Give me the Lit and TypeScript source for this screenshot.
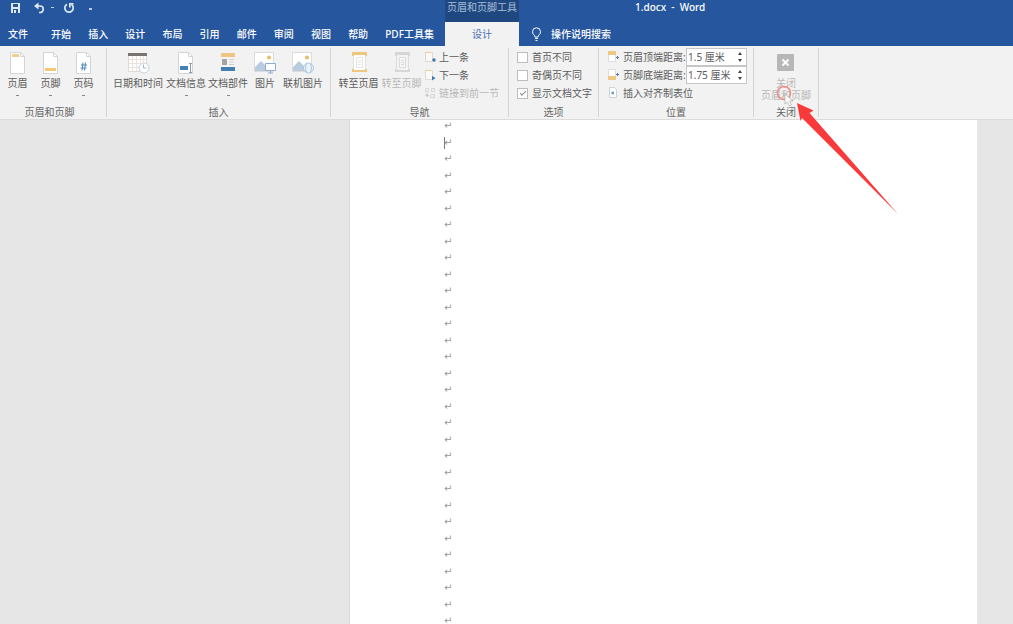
import { LitElement, html, css, svg, nothing } from "lit";
import { customElement, property } from "lit/decorators.js";

const sheet = svg`<path d="M1.5.5h10l4 4v17h-14z" fill="#fff" stroke="#d4d4d4"/><path d="M11.5.5v4h4" fill="none" stroke="#d4d4d4"/>`;

const big: Record<string, unknown> = {
  header: html`<svg width="18" height="22" viewBox="0 0 18 22">${sheet}<path d="M3 2h7v3H3z" fill="#f3cf8e"/></svg>`,
  footer: html`<svg width="18" height="22" viewBox="0 0 18 22">${sheet}<path d="M3 16h11v3H3z" fill="#f3c776"/></svg>`,
  number: html`<svg width="18" height="22" viewBox="0 0 18 22">${sheet}<path d="M8 10.500l-1 8M10.500 10.500l-1 8M6 13h6M5.500 16h6" stroke="#4c88b8" fill="none"/></svg>`,
  date: html`<svg width="24" height="22" viewBox="0 0 24 22"><path d="M2.500 1.500h18v18h-18z" fill="#fff" stroke="#e0d9d5"/><path d="M6.500 4v15M10.500 4v15M14.500 4v15M17.500 4v15M3 7.500h17M3 11.500h17M3 15.500h17" stroke="#eae2dd"/><path d="M2 1h19v3H2z" fill="#777371"/><circle cx="18" cy="16" r="5" fill="#fff" stroke="#c2d2e2"/><path d="M17.500 12.500V16h3" fill="none" stroke="#9eb9d3"/></svg>`,
  info: html`<svg width="18" height="22" viewBox="0 0 18 22">${sheet}<path d="M3 14h8v4H3z" fill="#4780b4"/><path d="M12 11.500h3M12 20.500h3M13.500 12v8" stroke="#8b9caf"/></svg>`,
  parts: html`<svg width="18" height="22" viewBox="0 0 18 22"><path d="M2 .5h14v21H2z" fill="#f7f5f2"/><path d="M2 1h14v4H2z" fill="#efc681"/><path d="M3 7h5v6H3z" fill="#a5a5a5"/><path d="M10 7.500h5M10 10h5M10 12.500h5" stroke="#ccc"/><path d="M2 15h14v4H2z" fill="#457eb2"/></svg>`,
  picture: html`<svg width="22" height="22" viewBox="0 0 22 22"><path d="M.5.500h19v19H.5z" fill="#fff" stroke="#dcdcdc"/><circle cx="15" cy="5.500" r="2" fill="#e9bd63"/><path d="M1 19v-4l6-6 5 5 3-2 4 4v3z" fill="#b9cbdf"/><path d="M11.500 11.500h10v7h-10z" fill="#fff" stroke="#8dacd0"/><path d="M14 21h5M16.500 19v2" stroke="#8dacd0"/></svg>`,
  online: html`<svg width="22" height="22" viewBox="0 0 22 22"><path d="M.5.500h19v19H.5z" fill="#fff" stroke="#dcdcdc"/><circle cx="15" cy="5.500" r="2" fill="#e9bd63"/><path d="M1 19v-4l6-6 5 5 3-2 4 4v3z" fill="#b9cbdf"/><circle cx="16.500" cy="16" r="5" fill="#eef4fa" stroke="#a9c4df"/><path d="M14.500 11.500q-2 4.500 0 9M18.500 11.500q2 4.500 0 9" fill="none" stroke="#a9c4df"/></svg>`,
  toHeader: html`<svg width="18" height="22" viewBox="0 0 18 22"><path d="M3.500 2v17h12V2" fill="#fff" stroke="#e3dfd8"/><path d="M2 0h15v4h-2V3H4v1H2zM2 20h15v-3h-2v1H4v-1H2z" fill="#efc67c"/><path d="M6.500 5.500h6v10h-6z" fill="#fff" stroke="#e3e3e3"/><path d="M8 8.500h3M8 10.500h3M8 12.500h3" stroke="#e3e3e3"/></svg>`,
  toFooter: html`<svg width="18" height="22" viewBox="0 0 18 22"><path d="M3.500 2v17h12V2" fill="#f3f3f3" stroke="#dcdcdc"/><path d="M2 0h15v4h-2V3H4v1H2zM2 20h15v-3h-2v1H4v-1H2z" fill="#d6d6d6"/><path d="M6.500 5.500h6v10h-6z" fill="#f6f6f6" stroke="#dadada"/><path d="M8 8.500h3M8 10.500h3M8 12.500h3" stroke="#dadada"/></svg>`,
  close: html`<svg width="18" height="22" viewBox="0 0 18 22"><rect x="0" y="2" width="17" height="17" rx="1" fill="#b7b7b7"/><path d="M5.500 7.500l6 6M11.500 7.500l-6 6" stroke="#fff" stroke-width="2"/></svg>`,
};

const small: Record<string, unknown> = {
  prev: html`<svg width="12" height="12" viewBox="0 0 12 12"><path d="M1.500 1.500h7v9h-7z" fill="#fbf8f5" stroke="#e2d8d0"/><path d="M1 1h6v1H1z" fill="#f1cf9b"/><circle cx="10" cy="9" r="1.700" fill="#3f75ad"/></svg>`,
  next: html`<svg width="12" height="12" viewBox="0 0 12 12"><path d="M1.500 1.500h7v9h-7z" fill="#fbf8f5" stroke="#e2d8d0"/><path d="M1 1h6v1H1z" fill="#f1cf9b"/><path d="M8 7l3.500 2L8 11.500z" fill="#3f75ad"/></svg>`,
  link: html`<svg width="12" height="12" viewBox="0 0 12 12"><path d="M1.500 1.500h3v3h-3zM7.500 1.500h3v3h-3zM6.500 7.500h4v3h-4z" fill="none" stroke="#d6d6d6"/><path d="M3 6v4M1.500 8.500h3" stroke="#c2c2c2"/></svg>`,
  top: html`<svg width="12" height="12" viewBox="0 0 12 12"><path d="M.5.500h7v10h-7z" fill="#fff" stroke="#ddd"/><path d="M0 0h8v4H0z" fill="#edc783"/><path d="M8 6.500h3M9.500 5v3" stroke="#5b7ca8"/></svg>`,
  bottom: html`<svg width="12" height="12" viewBox="0 0 12 12"><path d="M.5.500h7v10h-7z" fill="#fff" stroke="#ddd"/><path d="M0 7h8v4H0z" fill="#edc783"/><path d="M8 5.500h3M9.500 4v3" stroke="#5b7ca8"/></svg>`,
  tab: html`<svg width="12" height="12" viewBox="0 0 12 12"><path d="M1.500.5h5l2 2v8h-7z" fill="#fff" stroke="#c9d3dc"/><path d="M3 6h3M5 4.500v3" stroke="#4b7db0"/></svg>`,
};

@customElement("ribbon-button")
class RibbonButton extends LitElement {
  @property() icon = "";
  @property() label = "";
  @property({ type: Boolean }) menu = false;
  @property({ type: Boolean }) disabled = false;
  static styles = css`
    :host { display: block; }
    button {
      display: flex; flex-direction: column; align-items: center; width: 100%;
      padding: 4px 0 0; border: 0; background: none; color: #5c5c5c;
      font: 10px/12px "Noto Sans", "Noto Sans CJK SC", sans-serif; white-space: pre;
    }
    button:disabled { color: #b8b8b8; }
    svg { display: block; }
    .label { padding-top: 3px; }
    .caret { width: 3px; height: 1px; margin-top: 6px; background: #888; }
  `;
  render() {
    return html`<button ?disabled=${this.disabled}>
      ${big[this.icon]}<span class="label">${this.label}</span>${this.menu ? html`<span class="caret"></span>` : nothing}
    </button>`;
  }
}

@customElement("ribbon-group")
class RibbonGroup extends LitElement {
  @property() label = "";
  static styles = css`
    :host { display: flex; flex: none; box-sizing: border-box; border-right: 1px solid #f2f2f2; border-image: linear-gradient(transparent 3px, #d4d4d4 3px, #d4d4d4 70px, transparent 70px) 1; }
    .column { flex: 1; padding-top: 2px; }
    .body { display: flex; height: 57px; }
    .title { text-align: center; line-height: 14px; color: #666; padding-right: var(--title-inset, 0); }
  `;
  render() {
    return html`<div class="column"><div class="body"><slot></slot></div><div class="title">${this.label}</div></div>`;
  }
}

@customElement("app-root")
class AppRoot extends LitElement {
  static styles = css`
    :host {
      display: flex; flex-direction: column; position: relative; height: 100vh; overflow: hidden;
      background: #e6e6e6; color: #5c5c5c; font: 10px/12px "Noto Sans", "Noto Sans CJK SC", sans-serif;
    }
    svg { display: block; flex: none; }
    button, input { font: inherit; color: inherit; }
    button { border: 0; padding: 0; background: none; }

    .top { display: grid; grid-template-columns: 445px 74px 1fr; grid-template-rows: 22px 24px; background: #26579e; color: #fff; flex: none; }
    .quick { display: flex; align-items: flex-start; gap: 9px; padding: 2px 0 0 9px; }
    .quick .undo { display: flex; align-items: center; gap: 6px; padding-left: 3px; }
    .context { background: #1f4880; color: #a9bdd8; text-align: center; line-height: 15px; white-space: nowrap; }
    .title { margin: 0; padding-left: 116px; font-size: 10px; font-weight: 500; line-height: 15px; white-space: pre; }
    .tabs { display: flex; align-items: center; padding: 0 11px 0 8px; gap: 23px; font-weight: 500; }
    .tabs nav { display: flex; flex: 1; justify-content: space-between; }
    .tabs a, .active { color: inherit; text-decoration: none; white-space: nowrap; }
    .active { background: #f2f2f2; color: #4a70ad; text-align: center; line-height: 24px; }
    .search { display: flex; align-items: center; gap: 9px; padding-left: 12px; font-weight: 500; }

    .ribbon { display: flex; flex: none; background: #f2f2f2; border-bottom: 1px solid #dcdcdc; height: 73px; }
    .hf { width: 107px; --title-inset: 7px; }
    .insert { width: 224px; }
    .nav { width: 178px; }
    .options { width: 90px; }
    .position { width: 155px; }
    .close { width: 65px; }
    .lead { padding-left: 1px; }
    .lead4 { padding-left: 4px; }
    .lead6 { padding-left: 6px; }
    .row { display: flex; }
    .b32 { width: 32px; } .b33 { width: 33px; } .b42 { width: 42px; } .b43 { width: 43px; } .b44 { width: 44px; } .b54 { width: 54px; } .b64 { width: 64px; }

    .stack { display: grid; grid-template-rows: repeat(3, 18px); align-content: start; }
    .stack > * { display: flex; align-items: center; gap: 3px; white-space: nowrap; }
    .stack button:disabled { color: #b8b8b8; }
    .moves { padding-left: 1px; }
    .checks { padding-left: 8px; }
    .checks input { appearance: none; box-sizing: border-box; width: 11px; height: 11px; margin: 0 1px 0 0; border: 1px solid #bdbdbd; background: #fff; display: grid; place-items: center; }
    .checks input:checked::after { content: ""; width: 5px; height: 2px; border-left: 1px solid #888; border-bottom: 1px solid #888; transform: translateY(-1px) rotate(-45deg); }
    .fields { padding-left: 9px; }
    .fields label { width: 60px; }
    .spin { display: flex; box-sizing: border-box; width: 61px; height: 18px; border: 1px solid #c6c6c6; background: #fff; }
    .spin input { flex: 1; min-width: 0; border: 0; padding: 0 0 0 1px; background: none; outline: 0; }
    .arrows { display: flex; flex-direction: column; justify-content: space-between; width: 11px; padding: 3px 0; }
    .arrows button { line-height: 0; }

    .canvas { flex: 1; min-height: 0; display: flex; padding: 0 36px 0 349px; }
    .page { flex: 1; background: #fff; border-left: 1px solid #d9d9d9; overflow: hidden; display: flex; }
    .lines { display: flex; flex-direction: column; justify-content: space-between; margin: 0 0 -3px 94px; }
    .lines p { margin: 0; height: 12px; font: 10px/12px "DejaVu Sans", sans-serif; color: #999; }
    .lines p.caret { background: linear-gradient(#777, #777) 0 0 / 1px 100% no-repeat; }

    .pointer { position: absolute; left: 770px; top: 80px; pointer-events: none; }
  `;

  private tabs = ["开始", "插入", "设计", "布局", "引用", "邮件", "审阅", "视图", "帮助", "PDF工具集"];

  private spin(id: string, value: string) {
    return html`<span class="spin"><input id=${id} .value=${value} />
      <span class="arrows">
        <button aria-label="+"><svg width="11" height="3" viewBox="0 0 11 3"><path d="M3 3l2-3 2 3z" fill="#444"/></svg></button>
        <button aria-label="-"><svg width="11" height="3" viewBox="0 0 11 3"><path d="M3 0l2 3 2-3z" fill="#444"/></svg></button>
      </span></span>`;
  }

  render() {
    return html`
      <header class="top">
        <div class="quick">
          <button aria-label="保存"><svg width="12" height="12" viewBox="0 0 12 12"><path d="M2 1h9v10H2z" fill="#dce9f7"/><path d="M4 2h5v3H4z" fill="#26579e"/><path d="M4 7h5v4H4z" fill="#26579e"/><path d="M5 8h2v3H5z" fill="#dce9f7"/></svg></button>
          <div class="undo">
            <button aria-label="撤销"><svg width="12" height="12" viewBox="0 0 12 12"><path d="M3 4h4a3 3 0 010 6.500H6" fill="none" stroke="#dce9f7" stroke-width="1.700"/><path d="M5.500.5v7L1 4z" fill="#dce9f7"/></svg></button>
            <svg width="3" height="2" viewBox="0 0 3 2"><path d="M0 0h3v1H0z" fill="#b9cbe6"/></svg>
          </div>
          <button aria-label="重复"><svg width="12" height="12" viewBox="0 0 12 12"><path d="M4 2.200A4.200 4.200 0 108.500 2.500" fill="none" stroke="#dce9f7" stroke-width="1.700"/><path d="M6 1h4.500v1.500H7.700V5.500H6z" fill="#dce9f7"/></svg></button>
          <svg width="12" height="12" viewBox="0 0 12 12"><path d="M5 6h3v2H5z" fill="#b9cbe6"/></svg>
        </div>
        <div class="context">页眉和页脚工具</div>
        <h1 class="title">1.docx  -  Word</h1>
        <div class="tabs"><a href="#">文件</a><nav>${this.tabs.map((t) => html`<a href="#">${t}</a>`)}</nav></div>
        <a class="active" href="#">设计</a>
        <div class="search">
          <svg width="11" height="14" viewBox="0 0 11 14"><path d="M4 10C4 8 1.500 7.500 1.500 4.800a4 4 0 018 0C9.500 7.500 7 8 7 10z" fill="none" stroke="#fff"/><path d="M4 11.500h3M4.500 13.500h2" stroke="#fff"/></svg>
          <span>操作说明搜索</span>
        </div>
      </header>
      <div class="ribbon">
        <ribbon-group class="hf" label="页眉和页脚"><div class="row lead">
          <ribbon-button class="b33" icon="header" label="页眉" menu></ribbon-button>
          <ribbon-button class="b33" icon="footer" label="页脚" menu></ribbon-button>
          <ribbon-button class="b33" icon="number" label="页码" menu></ribbon-button>
        </div></ribbon-group>
        <ribbon-group class="insert" label="插入"><div class="row lead4">
          <ribbon-button class="b54" icon="date" label="日期和时间"></ribbon-button>
          <ribbon-button class="b42" icon="info" label="文档信息" menu></ribbon-button>
          <ribbon-button class="b42" icon="parts" label="文档部件" menu></ribbon-button>
          <ribbon-button class="b32" icon="picture" label="图片"></ribbon-button>
          <ribbon-button class="b44" icon="online" label="联机图片"></ribbon-button>
        </div></ribbon-group>
        <ribbon-group class="nav" label="导航"><div class="row lead6">
          <ribbon-button class="b43" icon="toHeader" label="转至页眉"></ribbon-button>
          <ribbon-button class="b43" icon="toFooter" label="转至页脚" disabled></ribbon-button>
          <div class="stack moves">
            <button>${small.prev}上一条</button>
            <button>${small.next}下一条</button>
            <button disabled>${small.link}链接到前一节</button>
          </div>
        </div></ribbon-group>
        <ribbon-group class="options" label="选项"><div class="stack checks">
          <label><input type="checkbox" />首页不同</label>
          <label><input type="checkbox" />奇偶页不同</label>
          <label><input type="checkbox" checked />显示文档文字</label>
        </div></ribbon-group>
        <ribbon-group class="position" label="位置"><div class="stack fields">
          <div>${small.top}<label for="top">页眉顶端距离:</label>${this.spin("top", "1.5 厘米")}</div>
          <div>${small.bottom}<label for="bottom">页脚底端距离:</label>${this.spin("bottom", "1.75 厘米")}</div>
          <button>${small.tab}插入对齐制表位</button>
        </div></ribbon-group>
        <ribbon-group class="close" label="关闭">
          <ribbon-button class="b64" icon="close" label=${"关闭\n页眉和页脚"} disabled></ribbon-button>
        </ribbon-group>
      </div>
      <main class="canvas"><div class="page"><div class="lines">
        ${Array.from({ length: 31 }, (_, i) => html`<p class=${i === 1 ? "caret" : ""}>↵</p>`)}
      </div></div></main>
      <svg class="pointer" width="130" height="136" viewBox="0 0 130 136">
        <circle cx="14" cy="13" r="6.500" fill="none" stroke="#ee8b84" stroke-width="1.500"/>
        <path d="M15 14v10l2.500-2 2 4 2-1-2-4h3.500z" fill="#fff" stroke="#aaa" stroke-width=".7"/>
        <path d="M27 23l16.500 7.500-4 2.500L128 134 32 38l-1.500 3z" fill="#f93a3a"/>
      </svg>
    `;
  }
}
